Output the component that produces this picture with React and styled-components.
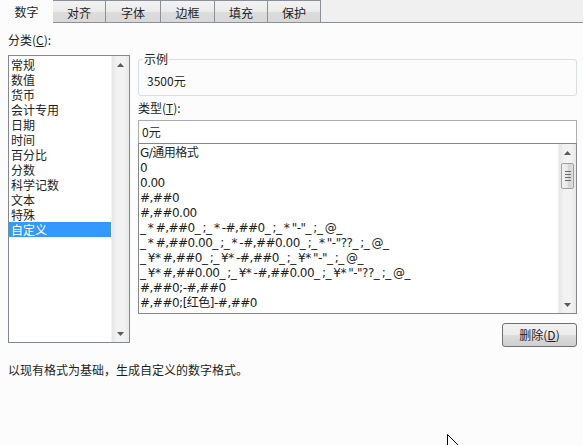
import React from 'react';
import styled, { createGlobalStyle } from 'styled-components';

const GlobalStyle = createGlobalStyle`
  html, body {
    margin: 0;
    padding: 0;
    background: #fcfcfc;
  }
  body {
    width: 583px;
    height: 445px;
    overflow: hidden;
    font-family: "Noto Sans CJK SC", "Liberation Sans", sans-serif;
    font-size: 12px;
    color: #1e1e1e;
  }
`;

const Dialog = styled.div`
  position: relative;
  width: 583px;
  height: 445px;
  background: #fcfcfc;
`;

const TabBar = styled.div`
  display: flex;
  height: 22px;
  background: #f0f0f0;
  border-bottom: 1px solid #8c8f96;
`;

const Tab = styled.div`
  width: ${({ w }) => w}px;
  height: ${({ active }) => (active ? 23 : 22)}px;
  box-sizing: border-box;
  display: flex;
  align-items: center;
  justify-content: center;
  line-height: 15px;
  font-size: 12px;
  color: #1e1e1e;
  background: ${({ active }) =>
    active ? '#fcfcfc' : 'linear-gradient(#f3f3f3 0%, #ebebeb 50%, #dcdcdc 51%, #d8d8d8 100%)'};
  border-right: ${({ active }) => (active ? 'none' : '1px solid #8c8f96')};
  border-top: ${({ active }) => (active ? 'none' : '1px solid #8c8f96')};
  padding-top: ${({ active }) => (active ? 0 : 1)}px;
`;

const Body = styled.div`
  display: flex;
  gap: 8px;
  padding: 9px 6px 0 8px;
`;

const LeftCol = styled.div`
  display: flex;
  flex-direction: column;
  width: 122px;
`;

const RightCol = styled.div`
  display: flex;
  flex-direction: column;
  flex: 1;
  padding-top: 19px;
`;

const Label = styled.div`
  line-height: 16px;
  height: 16px;
  margin-top: ${({ mt }) => mt || 0}px;
  margin-bottom: ${({ mb }) => mb || 0}px;
  u { text-decoration: underline; }
`;

const ListBox = styled.div`
  position: relative;
  display: flex;
  box-sizing: border-box;
  height: ${({ h }) => h}px;
  border: 1px solid #828790;
  background: #ffffff;
  margin-top: ${({ mt }) => mt || 0}px;
`;

const Items = styled.div`
  flex: 1;
  padding-top: ${({ pt }) => pt || 1}px;
  overflow: hidden;
  font-family: ${({ latin }) =>
    latin ? '"DejaVu Sans", "Noto Sans CJK SC", sans-serif' : '"Noto Sans CJK SC", sans-serif'};
  letter-spacing: ${({ latin }) => (latin ? '-0.5px' : 'normal')};
  word-spacing: ${({ latin }) => (latin ? '-1px' : 'normal')};
`;

const Item = styled.div`
  height: 15px;
  line-height: 15px;
  padding-left: ${({ pl }) => pl || 2}px;
  white-space: pre;
  background: ${({ selected }) => (selected ? '#3399ff' : 'transparent')};
  color: ${({ selected }) => (selected ? '#ffffff' : '#1e1e1e')};
`;

const ScrollBar = styled.div`
  width: 17px;
  display: flex;
  flex-direction: column;
  align-items: center;
  background: linear-gradient(90deg, #e6e6e6, #f2f2f2 30%, #f2f2f2 70%, #e8e8e8);
  border-left: 1px solid #f4f4f4;
`;

const Arrow = styled.div`
  height: 17px;
  width: 17px;
  display: flex;
  align-items: center;
  justify-content: center;
`;

const Track = styled.div`
  flex: 1;
  display: flex;
  flex-direction: column;
  align-items: center;
`;

const Thumb = styled.div`
  width: 13px;
  height: 26px;
  margin-top: 2px;
  box-sizing: border-box;
  border: 1px solid #a0a0a0;
  border-radius: 2px;
  background: linear-gradient(90deg, #f3f3f3, #e6e6e6 50%, #d6d6d6 51%, #dddddd);
  display: flex;
  flex-direction: column;
  align-items: center;
  justify-content: center;
  gap: 2px;
`;

const Grip = styled.div`
  width: 6px;
  height: 1px;
  background: #6b6b6b;
`;

const Group = styled.fieldset`
  margin: 0;
  padding: 6px 8px 0 8px;
  height: 45px;
  box-sizing: border-box;
  border: 1px solid #d5dfe5;
  border-radius: 3px;
  legend {
    padding: 0 1px;
    margin-left: -4px;
    line-height: 16px;
    font-size: 12px;
  }
`;

const SampleValue = styled.div`
  line-height: 15px;
`;

const TypeInput = styled.div`
  box-sizing: border-box;
  height: 24px;
  border: 1px solid #abadb3;
  border-bottom-color: #828790;
  background: #ffffff;
  padding-left: 3px;
  line-height: 22px;
`;

const ButtonRow = styled.div`
  display: flex;
  justify-content: flex-end;
  margin-top: 9px;
`;

const Button = styled.button`
  width: 75px;
  height: 24px;
  box-sizing: border-box;
  border: 1px solid #707070;
  border-radius: 3px;
  background: linear-gradient(#f2f2f2 0%, #ebebeb 50%, #dddddd 51%, #cfcfcf 100%);
  font-family: inherit;
  font-size: 12px;
  color: #1e1e1e;
  padding: 0;
  line-height: 20px;
  u { text-decoration: underline; }
`;

const Footer = styled.div`
  padding: 15px 8px 0;
  line-height: 16px;
`;

const Cursor = styled.svg`
  position: absolute;
  left: 447px;
  top: 434px;
`;

const UpArrow = () => (
  <svg width="7" height="4" viewBox="0 0 7 4">
    <path d="M0 4 L3.5 0 L7 4 Z" fill="#5a5a5a" />
  </svg>
);

const DownArrow = () => (
  <svg width="7" height="4" viewBox="0 0 7 4">
    <path d="M0 0 L3.5 4 L7 0 Z" fill="#5a5a5a" />
  </svg>
);

const tabs = [
  { label: '数字', w: 53, active: true },
  { label: '对齐', w: 53 },
  { label: '字体', w: 55 },
  { label: '边框', w: 54 },
  { label: '填充', w: 53 },
  { label: '保护', w: 53 },
];

const categories = ['常规', '数值', '货币', '会计专用', '日期', '时间', '百分比', '分数', '科学记数', '文本', '特殊', '自定义'];

const formats = [
  'G/通用格式',
  '0',
  '0.00',
  '#,##0',
  '#,##0.00',
  '_ * #,##0_ ;_ * -#,##0_ ;_ * "-"_ ;_ @_',
  '_ * #,##0.00_ ;_ * -#,##0.00_ ;_ * "-"??_ ;_ @_',
  '_ ¥* #,##0_ ;_ ¥* -#,##0_ ;_ ¥* "-"_ ;_ @_',
  '_ ¥* #,##0.00_ ;_ ¥* -#,##0.00_ ;_ ¥* "-"??_ ;_ @_',
  '#,##0;-#,##0',
  '#,##0;[红色]-#,##0',
];

export default function App() {
  return (
    <Dialog>
      <GlobalStyle />
      <TabBar>
        {tabs.map(t => (
          <Tab key={t.label} w={t.w} active={t.active}>
            {t.label}
          </Tab>
        ))}
      </TabBar>
      <Body>
        <LeftCol>
          <Label mb={7}>
            分类(<u>C</u>):
          </Label>
          <ListBox h={288}>
            <Items>
              {categories.map(c => (
                <Item key={c} selected={c === '自定义'}>
                  {c}
                </Item>
              ))}
            </Items>
            <ScrollBar>
              <Arrow>
                <UpArrow />
              </Arrow>
              <Track />
              <Arrow>
                <DownArrow />
              </Arrow>
            </ScrollBar>
          </ListBox>
        </LeftCol>
        <RightCol>
          <Group>
            <legend>示例</legend>
            <SampleValue>3500元</SampleValue>
          </Group>
          <Label mt={4} mb={4}>
            类型(<u>T</u>):
          </Label>
          <TypeInput>0元</TypeInput>
          <ListBox h={171} mt={-1}>
            <Items latin pt={2}>
              {formats.map(f => (
                <Item key={f} pl={1}>
                  {f}
                </Item>
              ))}
            </Items>
            <ScrollBar>
              <Arrow>
                <UpArrow />
              </Arrow>
              <Track>
                <Thumb>
                  <Grip />
                  <Grip />
                  <Grip />
                  <Grip />
                </Thumb>
              </Track>
              <Arrow>
                <DownArrow />
              </Arrow>
            </ScrollBar>
          </ListBox>
          <ButtonRow>
            <Button>
              删除(<u>D</u>)
            </Button>
          </ButtonRow>
        </RightCol>
      </Body>
      <Footer>以现有格式为基础，生成自定义的数字格式。</Footer>
      <Cursor width="12" height="12" viewBox="0 0 12 12">
        <path d="M0.5 0.5 L0.5 11.5 L11.5 11.5 Z" fill="#ffffff" stroke="#000000" strokeWidth="1" />
      </Cursor>
    </Dialog>
  );
}
